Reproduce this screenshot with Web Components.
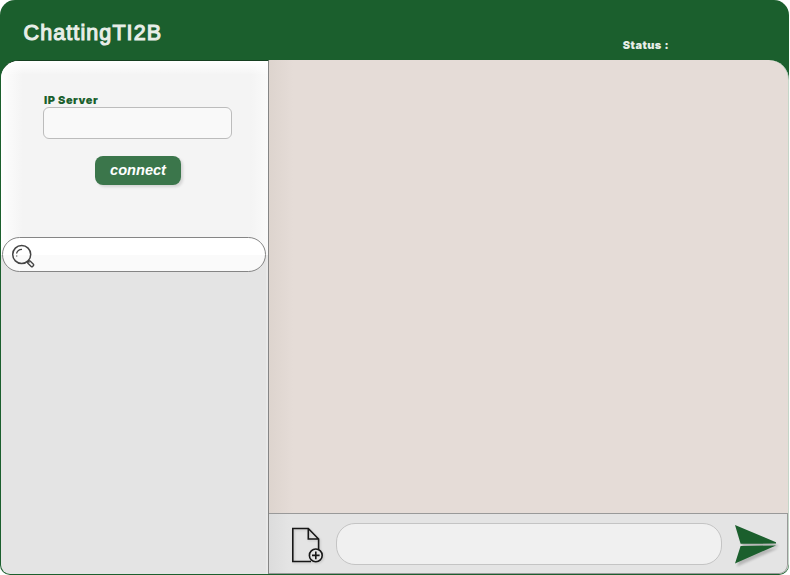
<!DOCTYPE html>
<html lang="en"><head><meta charset="utf-8"><title>ChattingTI2B</title>
<style>html,body{margin:0;height:100%;overflow:hidden;background:#fff}body{font-family:"Liberation Sans",Arial,sans-serif}</style></head>
<body>
<chat-window>
<app-header slot="header" name="ChattingTI2B">Status :</app-header>
<side-panel slot="side"><connect-form label="IP Server">connect</connect-form><search-bar></search-bar></side-panel>
<chat-area slot="main"><message-bar></message-bar></chat-area>
</chat-window>
<script>
const make=(tag,html)=>customElements.define(tag,class extends HTMLElement{
 constructor(){super();const t=document.createElement('template');t.innerHTML=html;
 this.attachShadow({mode:'open'}).append(t.content.cloneNode(true));}
 connectedCallback(){this.shadowRoot.querySelectorAll('[data-from]').forEach(e=>e.textContent=this.getAttribute(e.dataset.from));}
});
make('chat-window',`<style>
:host{display:grid;box-sizing:border-box;width:789px;height:575px;grid-template:60px 1fr / 268px 1fr;background:#1b5f2d;border-radius:15px 15px 10px 10px;overflow:hidden;padding:0 0 1px 1px;}
.h{grid-column:1/3}.s,.m{display:grid;min-width:0;min-height:0}
</style><div class="h"><slot name="header"></slot></div><div class="s"><slot name="side"></slot></div><div class="m"><slot name="main"></slot></div>`);
make('app-header',`<style>
:host{display:flex;height:60px;box-sizing:border-box;padding:20px 120px 0 22.5px;justify-content:space-between;align-items:flex-start;color:#e8eee8}
.t{font-size:21.5px;line-height:26px;letter-spacing:1.1px;-webkit-text-stroke:1.1px #e8eee8}
.s{font:900 11px/14px Inter,"Liberation Sans",sans-serif;margin-top:18px;letter-spacing:.45px}
</style><span class="t" data-from="name"></span><span class="s"><slot></slot></span>`);
make('side-panel',`<style>
:host{display:flex;flex-direction:column;box-sizing:border-box;background:#e4e4e4;border-right:1px solid #858585;border-top:1px solid #153f20;border-radius:18px 0 0 9px;overflow:hidden;box-shadow:inset -2px 0 #e9e9e9}
</style><slot></slot>`);
make('connect-form',`<style>
:host{display:flex;flex-direction:column;box-sizing:border-box;height:194px;margin-bottom:-18px;flex:none;padding:32px 36px 0 42px;background:linear-gradient(#fff,#fff0 14px),linear-gradient(90deg,#fff 0,#fafafa 8px,#f4f4f4 22px,#f4f4f4 250px,#fafafa);}
label{font:900 11px/14px Inter,"Liberation Sans",sans-serif;letter-spacing:.5px;color:#1b5f2d;padding-left:1px}
input{box-sizing:border-box;width:189px;height:32px;border:1px solid #bcbcbc;border-radius:6px;background:#f9f9f9;padding:0 8px;outline:0}
button{width:86px;height:29px;margin:17px 0 0 52px;padding:0;border:0;border-radius:8px;background:#3b764b;color:#fff;font:italic bold 14.6px/29px "Liberation Sans",Arial,sans-serif;box-shadow:2px 2px 3px #0002}
</style><label data-from="label"></label><input aria-label="server"><button><slot></slot></button>`);
make('search-bar',`<style>
:host{display:flex;position:relative;align-items:center;box-sizing:border-box;width:264px;height:35px;margin-left:1px;border:1px solid #858585;border-radius:18px;background:linear-gradient(#fff 52%,#fafafa 52%);padding-left:8px;flex:none}
svg{width:25px;height:26px;margin-top:5px}input{width:210px;border:0;background:none;outline:0}
</style><svg viewBox="0 0 25 26" fill="none" stroke="#444" stroke-width="1.5"><circle cx="10.7" cy="10.5" r="9"/><path d="M5.5 9.5Q6.5 5.4 11 5.3M5.7 11.5v1" stroke-width="1.2"/><path d="m17 17 1.5 1.5"/><rect x="18.4" y="16.3" width="6.6" height="3.2" rx="1" transform="rotate(44 18.4 16.3)" stroke-width="1.4"/></svg><input aria-label="search">`);
make('chat-area',`<style>
:host{display:grid;grid-template-rows:1fr 61px;background:linear-gradient(90deg,#ddd4ce,#e5dcd7 24px);border-radius:0 20px 10px 0;overflow:hidden;box-sizing:border-box;border-right:1px solid #c4d6c8}
.messages{min-height:0}
</style><div class="messages"></div><slot></slot>`);
make('message-bar',`<style>
:host{display:flex;align-items:center;box-sizing:border-box;background:linear-gradient(90deg,#dcdcdc,#e4e4e4 20px);border:1px solid #999;border-left:0;border-radius:0 0 9px 0}
.file{width:35px;height:41px;margin:3px 0 0 21px;flex:none;filter:drop-shadow(1px 1px 1px #0002)}
input{box-sizing:border-box;width:386px;height:42px;border:1px solid #c4c4c4;border-radius:19px;background:#f0f0f0;margin:1px 0 0 11px;padding:0 16px;outline:0}
.send{width:46px;height:44px;margin:3px 0 0 11px;flex:none;filter:drop-shadow(2px 3px 1px #0003)}
</style><svg class="file" viewBox="0 0 35 41" fill="none" stroke="#171717" stroke-width="1.6"><path d="M28.6 25V14L18.3 3.5H2.8v33H21M18.3 3.5V14h10.3"/><circle cx="25.8" cy="30.4" r="6.4" fill="#e4e4e4"/><path d="M22 30.4h7.6M25.8 26.6v7.6"/></svg><input aria-label="message"><svg class="send" viewBox="0 0 46 44" fill="#1b5f2d"><path d="M2 2 43 19.3 43 20.6 7.6 20.7ZM7.6 23 43 22.4 2 40.5Z"/></svg>`);
</script></body></html>
